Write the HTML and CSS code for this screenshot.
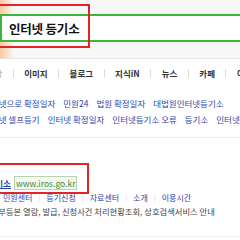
FILE: index.html
```html
<!DOCTYPE html>
<html>
<head>
<meta charset="utf-8">
<meta name="viewport" content="width=device-width, initial-scale=1.0">
<title>인터넷 등기소 - 검색</title>

<link rel="stylesheet" href="styles.css">
</head>

<body>

  <div class="page">

    <div class="header">
      <div class="glow"></div>
      <div class="search-box">
        <span class="query">인터넷 등기소</span>
      </div>
    </div>

    <div class="tabs">
      <span class="tab tab-cut">통합</span>
      <span class="tab">이미지</span>
      <span class="tab">블로그</span>
      <span class="tab">지식iN</span>
      <span class="tab">뉴스</span>
      <span class="tab">카페</span>
      <span class="tab">어학사전</span>
    </div>

    <div class="related">
      <div class="related-row">
        <a class="cut">인터넷으로 확정일자</a>
        <a>민원24</a>
        <a>법원 확정일자</a>
        <a>대법원인터넷등기소</a>
      </div>
      <div class="related-row">
        <a class="cut">인터넷 셀프등기</a>
        <a>인터넷 확정일자</a>
        <a>인터넷등기소 오류</a>
        <a>등기소</a>
        <a>인터넷등기</a>
      </div>
    </div>

    <div class="result">
      <div class="result-title">
        <a class="site-name">인터넷등기소</a>
        <span class="site-url">www.iros.go.kr</span>
      </div>
      <div class="site-links">
        <a>민원센터</a>
        <span class="sep">|</span>
        <a>등기신청</a>
        <span class="sep">|</span>
        <a>자료센터</a>
        <span class="sep">|</span>
        <a>소개</a>
        <span class="sep">|</span>
        <a>이용시간</a>
      </div>
      <p class="site-desc">등기부등본 열람, 발급, 신청사건 처리현황조회, 상호검색서비스 안내</p>
    </div>

    <!-- red annotation boxes drawn over the screenshot -->
    <div class="mark mark-search"></div>
    <div class="mark mark-result"></div>

  </div>

</body>
</html>
```

FILE: styles.css
```css
html, body {
  margin: 0;
  padding: 0;
  background: #fff;
}

.page {
  position: relative;
  width: 240px;
  height: 240px;
  overflow: hidden;
  font-family: "Noto Sans CJK KR", "Noto Sans", sans-serif;
}

a {
  text-decoration: none;
}

/* search header */

.header {
  position: relative;
  height: 59px;
  box-sizing: border-box;
  padding-top: 14px;
  background: #f7f7f7;
  border-bottom: 1px solid #e4e4e4;
}

.glow {
  position: absolute;
  top: 0;
  left: 0;
  width: 14px;
  height: 58px;
  background: linear-gradient(to right, rgba(250, 170, 90, 0.6), rgba(250, 170, 90, 0));
}

.search-box {
  position: relative;
  display: flex;
  align-items: center;
  width: 260px;
  height: 28px;
  box-sizing: border-box;
  padding-left: 7px;
  background: #fff;
  border: 2px solid #3db53a;
  border-right: none;
}

.query {
  font-size: 12.5px;
  font-weight: bold;
  color: #111;
  letter-spacing: -0.2px;
}

/* tabs */

.tabs {
  display: flex;
  align-items: center;
  height: 28px;
  margin-left: -24px;
  white-space: nowrap;
}

.tab {
  display: flex;
  align-items: center;
  padding: 0 10.5px;
  font-size: 8.5px;
  font-weight: bold;
  color: #333;
}

.tab + .tab {
  border-left: 1px solid #dcdcdc;
  line-height: 9px;
}

.tab-cut {
  color: #bbb;
}

/* related searches */

.related {
  height: 51px;
  box-sizing: border-box;
  padding-top: 8px;
  border-bottom: 1px solid #ececec;
}

.related-row {
  display: flex;
  gap: 8px;
  height: 16px;
  align-items: center;
  white-space: nowrap;
  font-size: 8.5px;
  color: #2b45b0;
}

.related-row .cut {
  margin-left: -17px;
}

/* result */

.result {
  padding-top: 38px;
  height: 99px;
  box-sizing: border-box;
  border-bottom: 1px solid #eeeeee;
}

.result-title {
  display: flex;
  align-items: center;
  gap: 3px;
  height: 14px;
  white-space: nowrap;
}

.site-name {
  margin-left: -36px;
  font-size: 8.5px;
  font-weight: bold;
  color: #2b45b0;
  text-decoration: underline;
}

.site-url {
  padding: 0 1px;
  font-size: 8.5px;
  line-height: 12px;
  color: #3f8a34;
  background: #f4f8f0;
  border: 1px solid #b9d3ae;
}

.site-links {
  display: flex;
  align-items: center;
  gap: 6px;
  height: 14px;
  padding-left: 3px;
  white-space: nowrap;
  font-size: 8px;
  color: #2b45b0;
}

.sep {
  color: #d4d4d4;
  font-size: 7px;
}

.site-desc {
  margin: 0 0 0 -17px;
  height: 14px;
  line-height: 14px;
  white-space: nowrap;
  font-size: 8.3px;
  color: #444;
}

/* annotation marks */

.mark {
  position: absolute;
  border: 2px solid #e0242a;
  box-sizing: border-box;
}

.mark-search {
  top: 4px;
  left: -4px;
  width: 94px;
  height: 44px;
}

.mark-result {
  top: 163px;
  left: -4px;
  width: 93px;
  height: 31px;
}
```
